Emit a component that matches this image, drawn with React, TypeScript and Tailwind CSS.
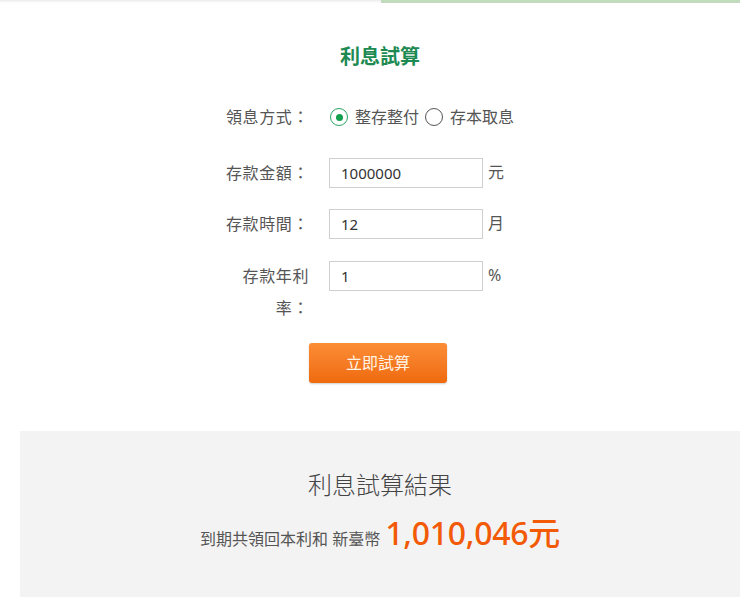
import React from "react";

const font = { fontFamily: '"Noto Sans", "Noto Sans CJK TC", sans-serif' };

function Radio({ checked, label }: { checked: boolean; label: string }) {
  return (
    <label className="flex items-center gap-[7px] cursor-pointer">
      <span
        className={
          checked
            ? "w-[18px] h-[18px] rounded-full border-[1.5px] border-[#2aa565] flex items-center justify-center bg-white"
            : "w-[18px] h-[18px] rounded-full border-[1.5px] border-[#555] flex items-center justify-center bg-white"
        }
      >
        {checked && <span className="w-[7px] h-[7px] rounded-full bg-[#12a04e]" />}
      </span>
      <span className="text-[16px] text-[#555]">{label}</span>
    </label>
  );
}

function Field({ label, value, unit, className }: { label: string; value: string; unit: string; className?: string }) {
  return (
    <div className={"flex items-start " + (className ?? "")}>
      <div className="w-[84px] text-right text-[16px] leading-[32px] tracking-[0.6px] text-[#555]">{label}</div>
      <div className="ml-[20px] flex items-center h-[32px]">
        <input
          readOnly
          value={value}
          className="w-[154px] h-[30px] border border-[#cfcfcf] bg-white pl-[11px] text-[15px] text-[#333] outline-none"
          style={font}
        />
        <span className="ml-[5px] -mt-[2px] text-[16px] text-[#555]">{unit}</span>
      </div>
    </div>
  );
}

export default function App() {
  return (
    <div className="w-[740px] h-[599px] bg-white overflow-hidden" style={font}>
      <div className="flex h-[3px]">
        <div className="w-[381px] bg-gradient-to-b from-[#ebebeb] to-white" />
        <div className="flex-1 bg-[#c2dbbd]" />
      </div>
      <div className="ml-[20px] w-[720px]">
        <h1 className="mt-[40px] text-center text-[20px] leading-[28px] font-bold text-[#1d8a52]">利息試算</h1>
        <div className="mt-[30px] pl-[205px]">
          <div className="flex items-start mb-[24px]">
            <div className="w-[84px] text-right text-[16px] leading-[32px] tracking-[0.6px] text-[#555]">領息方式：</div>
            <div className="ml-[21px] flex items-center h-[32px] gap-[6px]">
              <Radio checked label="整存整付" />
              <Radio checked={false} label="存本取息" />
            </div>
          </div>
          <Field label="存款金額：" value="1000000" unit="元" className="mb-[19px]" />
          <Field label="存款時間：" value="12" unit="月" className="mb-[20px]" />
          <Field label="存款年利率：" value="1" unit="%" />
        </div>
        <div className="mt-[19px] flex justify-center">
          <button
            className="w-[138px] h-[40px] rounded-[3px] bg-gradient-to-b from-[#fb8d35] to-[#ef6a0b] text-[16px] text-[#fff4e6] shadow-[0_1px_2px_rgba(0,0,0,0.2)] -ml-[4px]"
            style={font}
          >
            立即試算
          </button>
        </div>
        <div className="mt-[48px] h-[166px] bg-[#f3f3f3] flex flex-col items-center">
          <div className="mt-[38px] text-[24px] leading-[32px] font-light text-[#444]">利息試算結果</div>
          <div className="mt-[12px] flex items-baseline">
            <span className="text-[16px] text-[#555]">到期共領回本利和 新臺幣</span>
            <span className="ml-[5px] text-[32px] leading-[40px] font-medium text-[#f25a06] tracking-[-0.3px]">1,010,046元</span>
          </div>
        </div>
      </div>
    </div>
  );
}
